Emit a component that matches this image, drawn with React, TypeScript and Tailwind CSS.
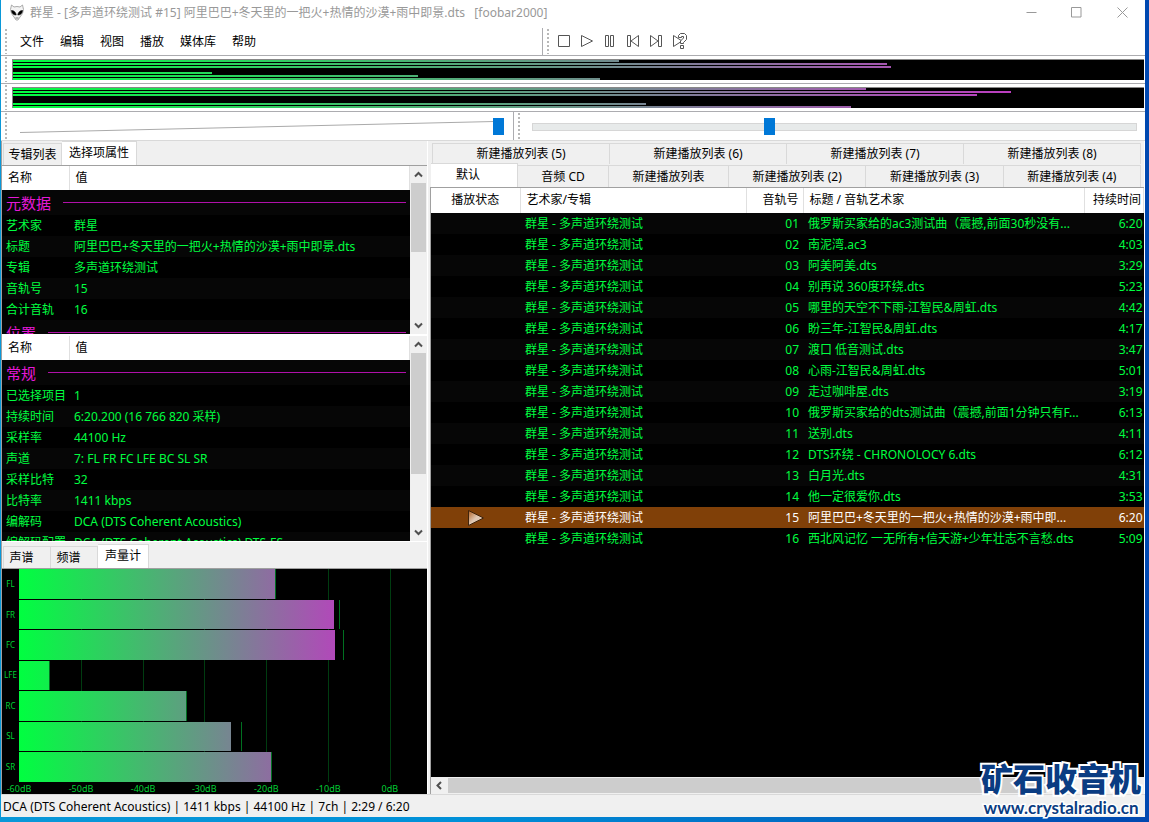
import React from "react";

const trackTitles: [string, string][] = [
  ["俄罗斯买家给的ac3测试曲（震撼,前面30秒没有...", "6:20"],
  ["南泥湾.ac3", "4:03"],
  ["阿美阿美.dts", "3:29"],
  ["别再说 360度环绕.dts", "5:23"],
  ["哪里的天空不下雨-江智民&周虹.dts", "4:42"],
  ["盼三年-江智民&周虹.dts", "4:17"],
  ["渡口 低音测试.dts", "3:47"],
  ["心雨-江智民&周虹.dts", "5:01"],
  ["走过咖啡屋.dts", "3:19"],
  ["俄罗斯买家给的dts测试曲（震撼,前面1分钟只有F...", "6:13"],
  ["送别.dts", "4:11"],
  ["DTS环绕 - CHRONOLOCY 6.dts", "6:12"],
  ["白月光.dts", "4:31"],
  ["他一定很爱你.dts", "3:53"],
  ["阿里巴巴+冬天里的一把火+热情的沙漠+雨中即...", "6:20"],
  ["西北风记忆 一无所有+信天游+少年壮志不言愁.dts", "5:09"],
];

const playingIndex = 14;

type Section = { title: string; rows: [string, string][] };

const metadata: Section[] = [
  {
    title: "元数据",
    rows: [
      ["艺术家", "群星"],
      ["标题", "阿里巴巴+冬天里的一把火+热情的沙漠+雨中即景.dts"],
      ["专辑", "多声道环绕测试"],
      ["音轨号", "15"],
      ["合计音轨", "16"],
    ],
  },
  { title: "位置", rows: [] },
];

const general: Section[] = [
  {
    title: "常规",
    rows: [
      ["已选择项目", "1"],
      ["持续时间", "6:20.200 (16 766 820 采样)"],
      ["采样率", "44100 Hz"],
      ["声道", "7: FL FR FC LFE BC SL SR"],
      ["采样比特", "32"],
      ["比特率", "1411 kbps"],
      ["编解码", "DCA (DTS Coherent Acoustics)"],
      ["编解码配置", "DCA (DTS Coherent Acoustics) DTS-ES"],
    ],
  },
];

// Bar and peak positions as a percentage of the plot width.
const channels = [
  { name: "FL", level: 62.7, peak: 62.7 },
  { name: "FR", level: 77.2, peak: 78.4 },
  { name: "FC", level: 77.5, peak: 79.4 },
  { name: "LFE", level: 7.4, peak: 7.4 },
  { name: "RC", level: 41, peak: 41 },
  { name: "SL", level: 52, peak: 54.4 },
  { name: "SR", level: 61.8, peak: 61.8 },
];

const ticks = [
  { label: "-60dB", at: 0 },
  { label: "-50dB", at: 15.2 },
  { label: "-40dB", at: 30.4 },
  { label: "-30dB", at: 45.4 },
  { label: "-20dB", at: 60.6 },
  { label: "-10dB", at: 75.8 },
  { label: "0dB", at: 90.9 },
];

const stripA = [53.6, 77.3, 77.6, 0, 17.6, 35.8, 51.9];
const stripB = [75.4, 88.2, 85.2, 0, 0, 56, 74.1];

function Grip() {
  return (
    <div className="my-[1px] ml-[4px] w-[2px] shrink-0 self-stretch bg-[repeating-linear-gradient(to_bottom,#b8b8b8_0,#b8b8b8_2px,transparent_2px,transparent_4px)]" />
  );
}

function Strip({ levels }: { levels: number[] }) {
  return (
    <div className="flex h-[28px] border-b border-[#acacb0] bg-white">
      <Grip />
      <div className="mt-[3px] mr-[1px] ml-[5px] flex h-[21px] flex-1 flex-col gap-[1px] border-t border-l border-[#888] bg-black">
        {levels.map((level, i) => (
          <div key={i} className="h-[2px]">
            <div
              className="h-full bg-[linear-gradient(to_right,#00ff40,#d029ce_96vw)] bg-[length:96vw_100%]"
              style={{ width: level + "%" }}
            />
          </div>
        ))}
      </div>
    </div>
  );
}

function Chevron({ d }: { d: string }) {
  return (
    <svg width="9" height="9" viewBox="0 0 9 9" fill="none" stroke="#505050" strokeWidth="2">
      <path d={d} />
    </svg>
  );
}

function VScroll({ thumb }: { thumb: string }) {
  return (
    <div className="mr-[1px] ml-[1px] flex w-[15px] shrink-0 flex-col items-center bg-[#f0f0f0]">
      <button aria-label="向上滚动" className="flex h-[17px] shrink-0 items-center justify-center">
        <Chevron d="M1 6.5 4.5 3 8 6.5" />
      </button>
      <div className={"w-full shrink-0 bg-[#cdcdcd] " + thumb} />
      <div className="flex-1" />
      <button aria-label="向下滚动" className="flex h-[17px] shrink-0 items-center justify-center">
        <Chevron d="M1 2.5 4.5 6 8 2.5" />
      </button>
    </div>
  );
}

function Properties({ sections, height, thumb }: { sections: Section[]; height: string; thumb: string }) {
  return (
    <div className={"flex overflow-hidden " + height}>
      <div className="flex-1 overflow-hidden bg-black">
        <table className="w-full table-fixed border-collapse">
          <colgroup>
            <col className="w-[67px]" />
            <col />
          </colgroup>
          <thead>
            <tr className="h-[24px] bg-white text-left text-black">
              <th className="border-r border-[#e0e0e0] p-0 pl-[6px] font-normal">名称</th>
              <th className="border-r border-[#e0e0e0] p-0 pl-[6px] font-normal">值</th>
            </tr>
          </thead>
          {sections.map((s) => (
            <tbody key={s.title} className="text-[#00ff40]">
              <tr className="h-[25px] bg-[#060606]">
                <th colSpan={2} className="p-0 pr-[4px] pl-[4px] font-normal">
                  <div className="flex items-center gap-[12px] text-[15px] leading-[24px] text-[#e619d8]">
                    {s.title}
                    <span className="h-[1px] flex-1 bg-[#b010a8]" />
                  </div>
                </th>
              </tr>
              {s.rows.map(([k, v]) => (
                <tr key={k} className="h-[21px] even:bg-black odd:bg-[#060606]">
                  <td className="p-0 pl-[4px] leading-[20px] whitespace-nowrap">{k}</td>
                  <td className="p-0 pl-[5px] leading-[20px] whitespace-nowrap">{v}</td>
                </tr>
              ))}
            </tbody>
          ))}
        </table>
      </div>
      <VScroll thumb={thumb} />
    </div>
  );
}

function Tab({ children, active, className }: { children: React.ReactNode; active?: boolean; className: string }) {
  return (
    <button
      role="tab"
      aria-selected={!!active}
      className={
        "shrink-0 border-t border-r border-[#d9d9d9] text-center whitespace-nowrap " +
        (active ? "self-stretch bg-white pb-[2px] " : "mt-[2px] self-stretch bg-[#f0f0f0] ") +
        className
      }
    >
      {children}
    </button>
  );
}

function LevelMeter() {
  return (
    <div className="flex flex-1 flex-col bg-black text-[9px] text-[#00d035]">
      <div className="flex flex-1">
        <div className="flex w-[17px] flex-col text-center text-[8px]">
          {channels.map((c) => (
            <div key={c.name} className="flex flex-1 items-center justify-center">
              {c.name}
            </div>
          ))}
        </div>
        <div className="relative flex flex-1 flex-col gap-[1px]">
          {ticks.slice(1).map((t) => (
            <div key={t.label} className="absolute inset-y-0 w-[1px] bg-[#003c10]" style={{ left: t.at + "%" }} />
          ))}
          {channels.map((c) => (
            <div key={c.name} className="relative flex-1">
              <div
                className="h-full bg-[linear-gradient(to_right,#00ff40,#d029ce)] bg-[length:371px_100%]"
                style={{ width: c.level + "%" }}
              />
              <div className="absolute inset-y-0 w-[1px] bg-[#007020]" style={{ left: c.peak + "%" }} />
            </div>
          ))}
        </div>
      </div>
      <div className="relative ml-[17px] h-[12px]">
        {ticks.map((t) => (
          <span key={t.label} className="absolute -translate-x-1/2 leading-[14px]" style={{ left: t.at + "%" }}>
            {t.label}
          </span>
        ))}
      </div>
    </div>
  );
}

function PlaybackIcon({ label, children }: { label: string; children: React.ReactNode }) {
  return (
    <button aria-label={label} className="flex w-[23px] justify-center">
      <svg width="18" height="18" viewBox="0 0 18 18" fill="none" stroke="#555" strokeWidth="1">
        {children}
      </svg>
    </button>
  );
}

const rangeBase =
  "relative h-[17px] w-full appearance-none bg-transparent [&::-webkit-slider-thumb]:h-[17px] [&::-webkit-slider-thumb]:w-[11px] [&::-webkit-slider-thumb]:appearance-none [&::-webkit-slider-thumb]:bg-[#0078d7]";

export default function App() {
  return (
    <div className="flex h-screen flex-col bg-[linear-gradient(to_right,#0a98d8,#0090d8_40%,#0048b0)] pr-[4px] pb-[5px] pl-[1px] font-['Noto_Sans','Noto_Sans_CJK_SC',sans-serif] text-[12px] leading-[18px] text-black">
      <div className="relative flex min-h-0 flex-1 flex-col bg-[#f0f0f0]">
        <header className="flex h-[28px] shrink-0 items-center bg-white pb-[3px] text-[#999]">
          <svg className="ml-[8px]" width="16" height="17" viewBox="0 0 16 17">
            <path
              d="M2.5 1 1.5 5.5 2.5 9.5 5 13l2 3h2l2-3 2.500-3.500 1-4L13.500 1 11 3 8 2.500 5 3z"
              fill="#f4f4f4"
              stroke="#aaa"
              strokeWidth="1"
            />
            <path d="M2.500 6.500c2.500 0 4.500 2 4.700 4.500C4.500 11 2.800 9.500 2.500 6.500zM13.500 6.500c-2.500 0-4.500 2-4.700 4.500 2.700 0 4.400-1.500 4.700-4.500z" fill="#000" stroke="#000" strokeWidth=".6" />
            <path d="M6.500 14h3" stroke="#777" />
          </svg>
          <h1 className="ml-[5px] flex-1 whitespace-pre">
            {"群星 - [多声道环绕测试 #15] 阿里巴巴+冬天里的一把火+热情的沙漠+雨中即景.dts   [foobar2000]"}
          </h1>
          <div className="flex">
            <button aria-label="最小化" className="flex w-[45px] justify-center">
              <svg width="11" height="11" viewBox="0 0 11 11" stroke="#999"><path d="M.5 5.500h10" /></svg>
            </button>
            <button aria-label="最大化" className="flex w-[45px] justify-center">
              <svg width="11" height="11" viewBox="0 0 11 11" stroke="#999" fill="none"><path d="M.5.5h9.500v9.500H.5z" /></svg>
            </button>
            <button aria-label="关闭" className="flex w-[46px] justify-center">
              <svg width="11" height="11" viewBox="0 0 11 11" stroke="#999"><path d="m.5.5 10 10m0-10-10 10" /></svg>
            </button>
          </div>
        </header>

        <div className="flex h-[28px] shrink-0 border-b border-[#acacb0] bg-white">
          <Grip />
          <nav className="flex flex-1 items-center gap-[16px] pl-[13px]">
            {["文件", "编辑", "视图", "播放", "媒体库", "帮助"].map((m) => (
              <button key={m}>{m}</button>
            ))}
          </nav>
          <div className="flex w-[603px] items-center border-l border-[#acacb0]">
            <div className="flex self-stretch"><Grip /></div>
            <div className="ml-[3px] flex items-center pb-[2px]">
              <PlaybackIcon label="停止"><path d="M3.500 3.500h11v11h-11z" /></PlaybackIcon>
              <PlaybackIcon label="播放"><path d="M3.500 3.500v11l11-5.500z" /></PlaybackIcon>
              <PlaybackIcon label="暂停"><path d="M4.500 3.500h3v11h-3zM9.500 3.500h3v11h-3z" /></PlaybackIcon>
              <PlaybackIcon label="上一个"><path d="M3.500 3.500h3v11h-3zM14.500 3.500v11L7 9z" /></PlaybackIcon>
              <PlaybackIcon label="下一个"><path d="M3.500 3.500v11L11 9zM11.500 3.500h3v11h-3z" /></PlaybackIcon>
              <PlaybackIcon label="随机">
                <path d="M3.500 3.500v11L12 9z" />
                <path d="M8.500 5.500V3.500l2-2h4l2 2v4l-3 3v1h-3V9l3-3V4.500h-2v1zM10.500 13.500h3v3h-3z" fill="#fff" />
              </PlaybackIcon>
            </div>
          </div>
        </div>

        <Strip levels={stripA} />
        <Strip levels={stripB} />

        <div className="flex h-[29px] shrink-0 border-b border-[#d9d9d9] bg-white">
          <Grip />
          <div className="relative ml-[12px] flex w-[495px] shrink-0 items-center border-r border-[#acacb0] pr-[9px]">
            <svg className="absolute top-[9px] left-[1px] h-[12px] w-[474px]" viewBox="0 0 474 12" preserveAspectRatio="none">
              <path d="M0 11.500 474 .5" stroke="#aaa" />
            </svg>
            <input type="range" aria-label="音量" defaultValue={100} className={rangeBase} />
          </div>
          <Grip />
          <div className="ml-[12px] flex flex-1 items-center pt-[1px] pr-[8px]">
            <input
              type="range"
              aria-label="播放位置"
              max={1000}
              defaultValue={391}
              className={
                rangeBase +
                " [&::-webkit-slider-runnable-track]:h-[8px] [&::-webkit-slider-runnable-track]:border [&::-webkit-slider-runnable-track]:border-[#d6d6d6] [&::-webkit-slider-runnable-track]:bg-[#e7eaea] [&::-webkit-slider-thumb]:-mt-[6px]"
              }
            />
          </div>
        </div>

        <main className="flex min-h-0 flex-1">
          <aside className="flex w-[427px] shrink-0 flex-col border-r border-l border-r-white border-l-[#a0a0a0]">
            <div role="tablist" className="flex h-[25px] shrink-0 border-b border-[#a0a0a0] pl-[1px]">
              <Tab className="w-[59px] border-l">专辑列表</Tab>
              <Tab active className="w-[75px]">选择项属性</Tab>
            </div>
            <Properties sections={metadata} height="h-[168px]" thumb="h-[69px]" />
            <div className="h-[2px] shrink-0 bg-white" />
            <Properties sections={general} height="h-[205px]" thumb="h-[121px]" />
            <div className="mb-[2px] h-[1px] shrink-0 bg-white" />
            <div role="tablist" className="flex h-[25px] shrink-0 border-b border-[#a0a0a0] pl-[1px]">
              <Tab className="w-[48px] border-l pr-[11px]">声谱</Tab>
              <Tab className="w-[47px] pr-[11px]">频谱</Tab>
              <Tab active className="w-[51px]">声量计</Tab>
            </div>
            <LevelMeter />
          </aside>

          <section className="ml-[2px] flex min-w-0 flex-1 flex-col border-r border-white">
            <div role="tablist" className="pr-[3px] pl-[2px]">
              <div className="flex h-[23px]">
                {[5, 6, 7, 8].map((n) => (
                  <Tab key={n} className="flex-1 first:border-l">{`新建播放列表 (${n})`}</Tab>
                ))}
              </div>
              <div className="-mt-[1px] -ml-[1px] flex h-[24px]">
                <Tab active className="w-[87px] pr-[12px]">默认</Tab>
                <Tab className="w-[91px]">音频 CD</Tab>
                <Tab className="w-[120px]">新建播放列表</Tab>
                <Tab className="flex-1">新建播放列表 (2)</Tab>
                <Tab className="flex-1">新建播放列表 (3)</Tab>
                <Tab className="flex-1">新建播放列表 (4)</Tab>
              </div>
            </div>
            <div className="flex min-h-0 flex-1 flex-col border-t border-l border-[#a0a0a0] bg-black">
              <div className="min-h-0 flex-1 overflow-hidden">
                <table className="w-full table-fixed border-collapse">
                  <colgroup>
                    <col className="w-[89px]" />
                    <col className="w-[226px]" />
                    <col className="w-[57px]" />
                    <col />
                    <col className="w-[59px]" />
                  </colgroup>
                  <thead>
                    <tr className="h-[25px] bg-white text-left whitespace-nowrap [&>th]:border-r [&>th]:border-[#e0e0e0] [&>th]:p-0 [&>th]:pb-[2px] [&>th]:font-normal">
                      <th className="text-center">播放状态</th>
                      <th><span className="pl-[6px]">艺术家/专辑</span></th>
                      <th className="text-right"><span className="pr-[4px]">音轨号</span></th>
                      <th><span className="pl-[6px]">标题 / 音轨艺术家</span></th>
                      <th className="text-right"><span className="pr-[2px]">持续时间</span></th>
                    </tr>
                  </thead>
                  <tbody>
                    {trackTitles.map(([title, time], i) => (
                      <tr
                        key={title}
                        className={
                          "h-[21px] leading-[20px] whitespace-nowrap [&>td]:p-0 " +
                          (i === playingIndex
                            ? "bg-[#804008] text-white"
                            : "text-[#00ff40] odd:bg-[#060606] even:bg-black")
                        }
                      >
                        <td>
                          {i === playingIndex && (
                            <svg className="mx-auto" width="16" height="16" viewBox="0 0 16 16" aria-label="正在播放">
                              <defs>
                                <linearGradient id="play" x1="0" y1="0" x2="1" y2="1">
                                  <stop offset="0" stopColor="#b06020" />
                                  <stop offset=".5" stopColor="#e0c8b4" />
                                  <stop offset="1" stopColor="#d8c0a8" />
                                </linearGradient>
                              </defs>
                              <path d="M.5.5v15L15.500 8z" fill="url(#play)" stroke="#40240c" />
                            </svg>
                          )}
                        </td>
                        <td><span className="pl-[5px]">群星 - 多声道环绕测试</span></td>
                        <td className="text-right"><span className="pr-[4px]">{String(i + 1).padStart(2, "0")}</span></td>
                        <td><span className="pl-[5px]">{title}</span></td>
                        <td className="text-right"><span className="pr-[1px]">{time}</span></td>
                      </tr>
                    ))}
                  </tbody>
                </table>
              </div>
              <div className="flex h-[17px] shrink-0 bg-[#f0f0f0]">
                <button aria-label="向左滚动" className="flex w-[17px] items-center justify-center">
                  <Chevron d="M6 1 2.500 4.500 6 8" />
                </button>
                <div className="my-[1px] w-[600px] bg-[#cdcdcd]" />
                <div className="flex-1" />
                <button aria-label="向右滚动" className="flex w-[17px] items-center justify-center">
                  <Chevron d="M3 1 6.500 4.500 3 8" />
                </button>
              </div>
            </div>
          </section>
        </main>

        <footer className="h-[23px] shrink-0 border-t border-[#d9d9d9] pl-[2px] leading-[24px]">
          DCA (DTS Coherent Acoustics) | 1411 kbps | 44100 Hz | 7ch | 2:29 / 6:20
        </footer>

        <div className="absolute right-[4px] -bottom-[3px] flex flex-col items-center whitespace-nowrap text-[#0a3c82]">
          <span className="text-[32px] leading-[35px] font-black [-webkit-text-stroke:4px_white] [paint-order:stroke_fill]">
            矿石收音机
          </span>
          <span className="font-[Lato] text-[17px] leading-[24px] font-bold [-webkit-text-stroke:3px_white] [paint-order:stroke_fill]">
            www.crystalradio.cn
          </span>
        </div>
      </div>
    </div>
  );
}
